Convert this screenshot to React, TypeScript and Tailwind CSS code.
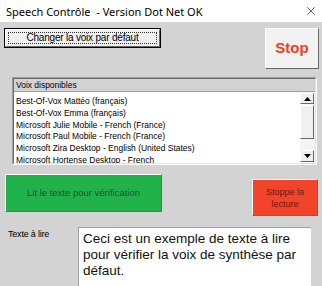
import { X } from "lucide-react";

const voices = [
  "Best-Of-Vox Mattéo (français)",
  "Best-Of-Vox Emma (français)",
  "Microsoft Julie Mobile - French (France)",
  "Microsoft Paul Mobile - French (France)",
  "Microsoft Zira Desktop - English (United States)",
  "Microsoft Hortense Desktop - French",
];

const raised =
  "border border-t-white border-l-white border-b-[#696969] border-r-[#696969]";

export default function App() {
  return (
    <div className="h-[286px] w-[322px] overflow-hidden bg-[#d3d3d3] font-['Liberation_Sans',Arial,sans-serif] text-black">
      {/* Title bar */}
      <div className="flex h-[22px] items-center justify-between bg-white pl-[6px] pr-[4px]">
        <span className="font-['Noto_Sans',sans-serif] text-[11px] leading-none text-black">
          Speech Contrôle &nbsp;- Version Dot Net OK
        </span>
        <X size={14} strokeWidth={1.2} className="text-[#222]" />
      </div>

      {/* Top row */}
      <div className="flex items-start justify-between pl-[4px] pr-[3px] pt-[6px]">
        <button className="h-[20px] w-[157px] border border-black bg-[#f0f0f0] p-0">
          <div className={`h-full w-full ${raised} p-[2px]`}>
            <div className="flex h-full w-full items-center justify-center border border-dotted border-[#333] text-[10px] leading-none tracking-[-0.2px]">
              Changer la voix par défaut
            </div>
          </div>
        </button>
        <button
          className={`flex h-[41px] w-[54px] items-center justify-center bg-[#f2f2f2] ${raised} text-[15px] font-bold text-[#f53b22]`}
        >
          Stop
        </button>
      </div>

      {/* Voices list */}
      <div className="ml-[12px] mr-[5px] mt-[8px] h-[88px] border border-t-[#a0a0a0] border-l-[#a0a0a0] border-b-white border-r-white">
        <div className="flex h-full flex-col border border-t-[#696969] border-l-[#696969] border-b-[#e3e3e3] border-r-[#e3e3e3] bg-white">
          <div className="flex h-[13px] items-center border-b border-[#a0a0a0] bg-[#d3d3d3] pl-[2px] text-[9.5px] leading-none">
            <span className="origin-left scale-x-[0.89] whitespace-nowrap">Voix disponibles</span>
          </div>
          <div className="flex min-h-0 flex-1">
            <div className="flex-1 overflow-hidden pl-[2px] pt-[3px]">
              <div className="origin-left scale-x-[0.89]">
                {voices.map((v) => (
                  <div key={v} className="h-[11.8px] whitespace-nowrap text-[9.5px] leading-[11.8px]">
                    {v}
                  </div>
                ))}
              </div>
            </div>
            <div className="flex w-[15px] flex-col bg-[#f4f4f4] pb-[1px] pr-[1px] pt-[1px]">
              <div className={`flex h-[11px] items-center justify-center bg-[#f0f0f0] ${raised}`}>
                <svg width="7" height="4" viewBox="0 0 7 4">
                  <path d="M3.5 0 L7 4 L0 4 Z" fill="#000" />
                </svg>
              </div>
              <div className={`mt-[1px] h-[34px] bg-[#f0f0f0] ${raised}`} />
              <div className="flex-1" />
              <div className={`flex h-[12px] items-center justify-center bg-[#f0f0f0] ${raised}`}>
                <svg width="7" height="4" viewBox="0 0 7 4">
                  <path d="M0 0 L7 0 L3.5 4 Z" fill="#000" />
                </svg>
              </div>
            </div>
          </div>
        </div>
      </div>

      {/* Action buttons */}
      <div className="flex items-start justify-between pl-[5px] pr-[4px] pt-[9px]">
        <button
          className={`flex h-[38px] w-[157px] items-center justify-center bg-[#22b24c] ${raised} text-[9.5px] text-[#17522b]`}
        >
          Lit le texte pour vérification
        </button>
        <button
          className={`mt-[5px] flex h-[37px] w-[66px] items-center justify-center bg-[#f1442b] ${raised} text-center text-[9px] leading-[12px] text-[#6a1a10]`}
        >
          Stoppe la
          <br />
          lecture
        </button>
      </div>

      {/* Text to read */}
      <div className="flex items-start pt-[11px]">
        <span className="w-[78px] shrink-0 pl-[8px] pt-[3px] text-[9px] leading-none tracking-[-0.2px]">
          Texte à lire
        </span>
        <div className="h-[80px] w-[233px] border-l border-t border-[#a0a0a0] bg-white pl-[4px] pt-[3px] text-[13.5px] leading-[16px] text-[#111]">
          Ceci est un exemple de texte à lire pour vérifier la voix de synthèse par défaut.
        </div>
      </div>
    </div>
  );
}
